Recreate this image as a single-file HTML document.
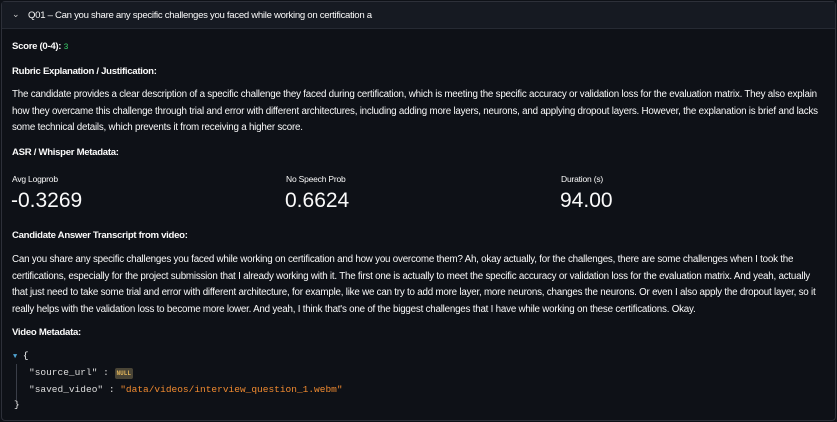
<!DOCTYPE html>
<html><head><meta charset="utf-8"><style>
html,body{margin:0;padding:0;background:#0e1117;width:837px;height:422px;overflow:hidden}
body{font-family:"Liberation Sans",sans-serif;color:#fafafa;font-size:9.6px;letter-spacing:-0.3px}
.box{position:absolute;left:1px;top:1px;width:833px;height:418px;border:1px solid #2d3039;border-radius:4px}
.hdr{position:absolute;left:0;top:0;width:833px;height:26px;background:#161a22;border-bottom:1px solid #262a33}
.t{position:absolute;white-space:nowrap}
b{font-weight:bold}
.p{position:absolute;left:11px;width:806px;line-height:16.5px;font-size:9.8px;letter-spacing:-0.22px}
.lab{font-size:8.5px;letter-spacing:-0.2px}
.big{font-size:21px;letter-spacing:0}
.mono{font-family:"Liberation Mono",monospace;font-size:9.5px;letter-spacing:0}
</style></head><body>
<div class="box">
<div class="hdr">
<span class="t" style="left:10px;top:7px;font-size:9px;color:#ccc">&#8964;</span>
<span class="t" style="left:26px;top:8px">Q01 – Can you share any specific challenges you faced while working on certification a</span>
</div>
<div class="t" style="left:10px;top:39px"><b>Score (0-4):</b> <span class="mono" style="color:#3dd56d;font-size:8px">3</span></div>
<div class="t" style="left:10px;top:64px"><b>Rubric Explanation / Justification:</b></div>
<div class="p" style="left:10px;top:85px;white-space:nowrap;letter-spacing:-0.22px">The candidate provides a clear description of a specific challenge they faced during certification, which is meeting the specific accuracy or validation loss for the evaluation matrix. They also explain<br>how they overcame this challenge through trial and error with different architectures, including adding more layers, neurons, and applying dropout layers. However, the explanation is brief and lacks<br>some technical details, which prevents it from receiving a higher score.</div>
<div class="t" style="left:10px;top:145px"><b>ASR / Whisper Metadata:</b></div>
<div class="t lab" style="left:10px;top:172px">Avg Logprob</div>
<div class="t lab" style="left:284px;top:172px">No Speech Prob</div>
<div class="t lab" style="left:559px;top:172px">Duration (s)</div>
<div class="t big" style="left:9px;top:187px">-0.3269</div>
<div class="t big" style="left:283px;top:187px">0.6624</div>
<div class="t big" style="left:558px;top:187px">94.00</div>
<div class="t" style="left:10px;top:228px"><b>Candidate Answer Transcript from video:</b></div>
<div class="p" style="left:10px;top:250px">Can you share any specific challenges you faced while working on certification and how you overcome them? Ah, okay actually, for the challenges, there are some challenges when I took the certifications, especially for the project submission that I already working with it. The first one is actually to meet the specific accuracy or validation loss for the evaluation matrix. And yeah, actually that just need to take some trial and error with different architecture, for example, like we can try to add more layer, more neurons, changes the neurons. Or even I also apply the dropout layer, so it really helps with the validation loss to become more lower. And yeah, I think that's one of the biggest challenges that I have while working on these certifications. Okay.</div>
<div class="t" style="left:10px;top:325px"><b>Video Metadata:</b></div>
<div class="t mono" style="left:11px;top:348px"><span style="color:#4fa3d1;font-size:7px">&#9660;</span> {</div>
<div style="position:absolute;left:14px;top:362px;width:1px;height:36px;background:#3a3e48"></div>
<div class="t mono" style="left:27px;top:365px;color:#ddd">"source_url" : <span style="background:#4a4536;color:#e0b45a;font-size:6px;font-weight:bold;padding:2px 2px;border-radius:2px">NULL</span></div>
<div class="t mono" style="left:27px;top:382px;color:#ddd">"saved_video" : <span style="color:#f08a30">"data/videos/interview_question_1.webm"</span></div>
<div class="t mono" style="left:12px;top:397px">}</div>
</div>
</body></html>
